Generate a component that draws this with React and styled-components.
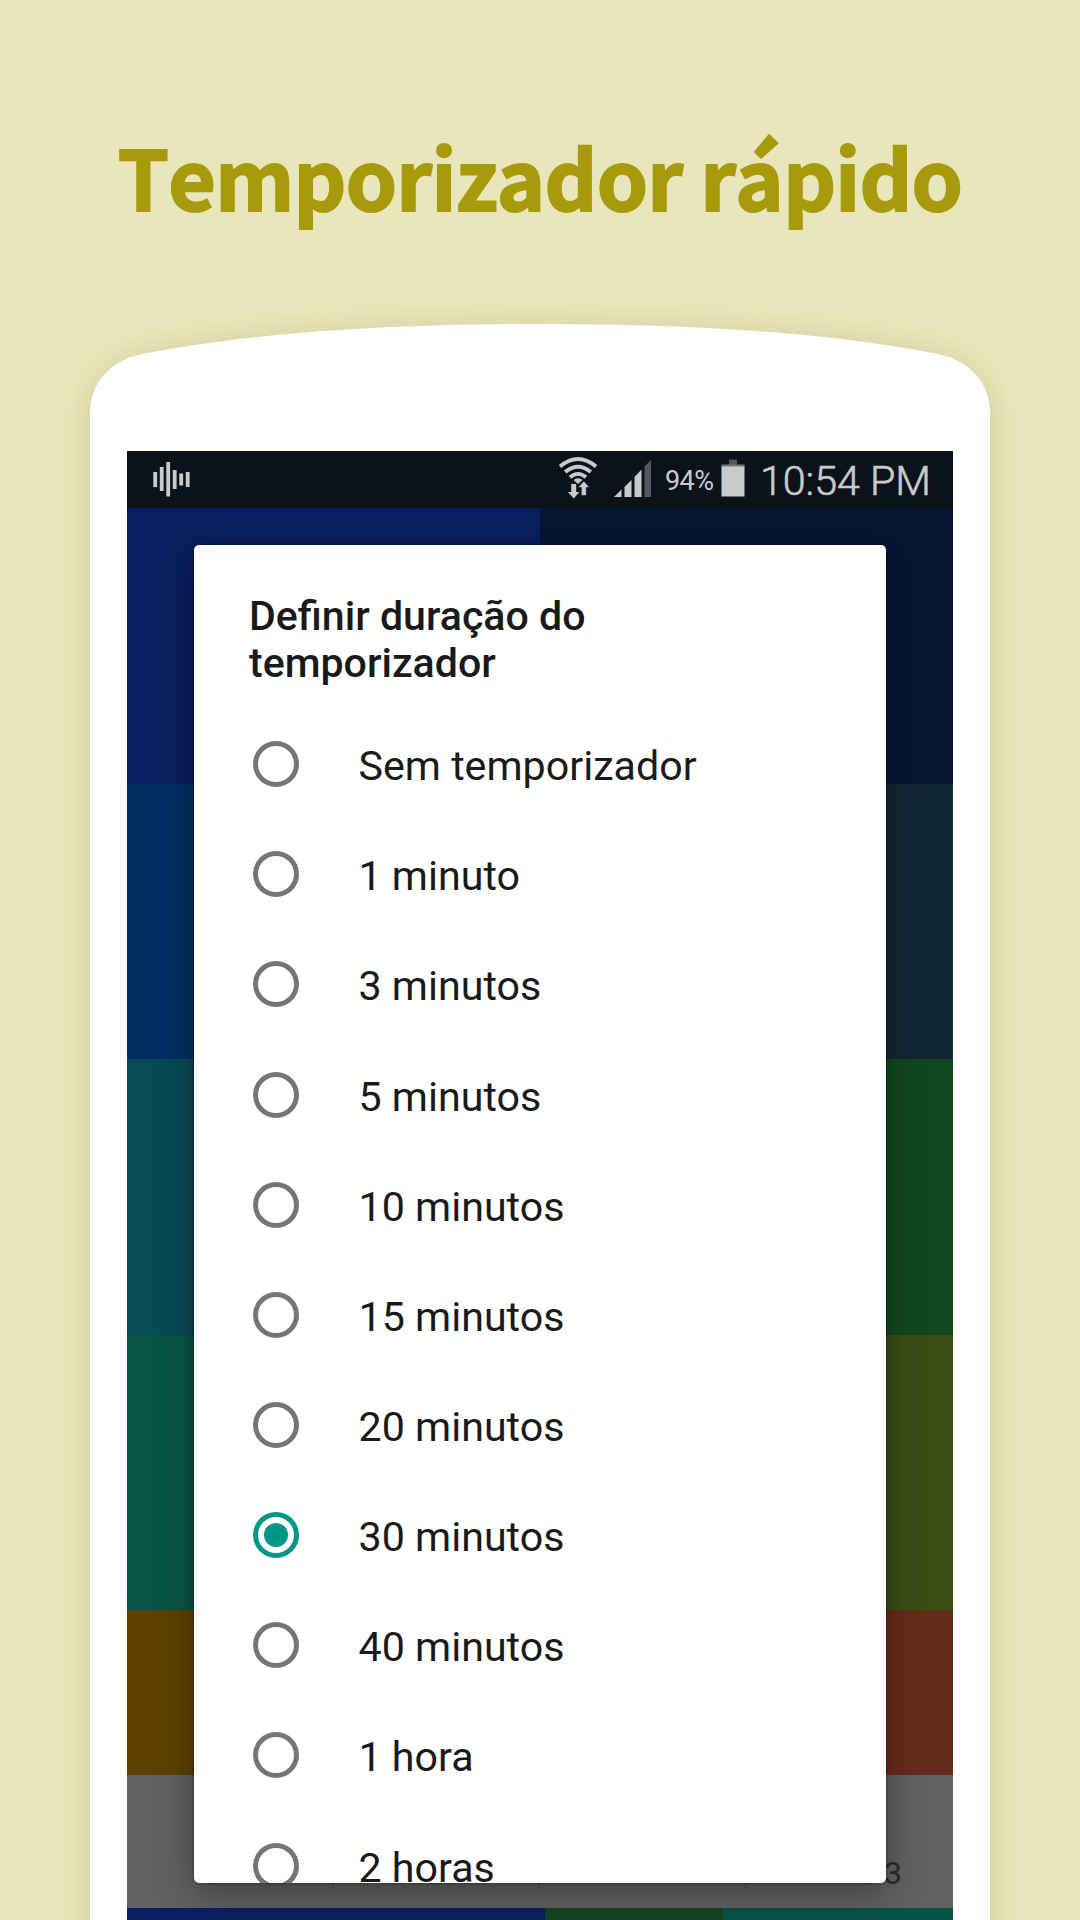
import React from 'react';
import styled, { createGlobalStyle } from 'styled-components';

const GlobalStyle = createGlobalStyle`
  * {
    box-sizing: border-box;
  }
  body {
    margin: 0;
    background: #e9e6bb;
    font-family: Roboto, 'Liberation Sans', sans-serif;
  }
`;

const Page = styled.main`
  display: flex;
  flex-direction: column;
  align-items: center;
  width: 1080px;
  height: 1920px;
  overflow: hidden;
  background: #e9e6bb;
`;

const Heading = styled.h1`
  display: flex;
  align-items: center;
  justify-content: center;
  flex: none;
  width: 100%;
  height: 324px;
  margin: 0;
  padding-top: 27px;
  color: #a89b0b;
  font-family: 'Noto Sans CJK JP', 'Open Sans', sans-serif;
  font-size: 82px;
  font-weight: 700;
  font-kerning: none;
  line-height: 1;
  letter-spacing: -0.7px;
  white-space: nowrap;
  -webkit-text-stroke: 2px #a89b0b;
  stroke-linejoin: round;
`;

const Phone = styled.section`
  position: relative;
  display: flex;
  flex-direction: column;
  flex: none;
  width: 900px;
  height: 1700px;
  padding: 127px 37px 0;
`;

const Shell = styled.div`
  position: absolute;
  inset: 0;
  filter: drop-shadow(0 3px 16px rgba(70, 60, 0, 0.16));
  &::before {
    content: '';
    display: block;
    height: 100%;
    background: #fff;
    clip-path: path('M0 90C0 58 20 37 52 30C165 8 300 0 450 0C600 0 735 8 848 30C880 37 900 58 900 90V1700H0Z');
  }
`;

const Screen = styled.div`
  position: relative;
  display: flex;
  flex-direction: column;
  width: 826px;
  height: 1469px;
  overflow: hidden;
`;

const StatusBar = styled.header`
  display: flex;
  justify-content: space-between;
  flex: none;
  height: 57px;
  padding: 0 22px 0 26px;
  background: #0b1219;
  color: #c9cacb;
`;

const StatusGroup = styled.div`
  display: flex;
  align-items: flex-start;
`;

const StatusIcon = styled.svg`
  display: block;
  flex: none;
  margin-right: ${({ $gap }) => $gap || 0}px;
`;

const Percent = styled.span`
  width: 56px;
  padding-top: 14px;
  font-size: 27px;
  line-height: 32px;
  letter-spacing: -0.5px;
`;

const Clock = styled.span`
  padding-top: 6px;
  font-size: 41.2px;
  font-weight: 300;
  line-height: 48px;
  white-space: nowrap;
  -webkit-text-stroke: 0.6px currentColor;
`;

const Tiles = styled.div`
  display: grid;
  grid-template-columns: 413px 413px;
  grid-template-rows: 276px 275px 276px 275px 165px;
  flex: none;
`;

const Tile = styled.div`
  background: ${({ $color }) => $color};
`;

const Controls = styled.div`
  display: grid;
  grid-template-columns: repeat(4, 1fr);
  flex: none;
  height: 133px;
  padding: 18px 0;
  background: #616161;
`;

const Control = styled.div`
  display: flex;
  align-items: flex-end;
  justify-content: flex-end;
  padding: 0 51px 1px 0;
  border-right: 2px solid #555;
  color: #2a2a2a;
  font-size: 32px;
  line-height: 32px;
  &:last-child {
    border-right: 0;
  }
`;

const Strip = styled.div`
  display: grid;
  grid-template-columns: 418px 177px 1fr;
  flex: 1;
`;

const Dialog = styled.div`
  position: absolute;
  top: 94px;
  left: 67px;
  width: 692px;
  height: 1338px;
  padding: 48px 0 0 55px;
  overflow: hidden;
  border-radius: 5px;
  background: #fff;
  color: #1a1a1a;
  box-shadow: 0 10px 36px rgba(0, 0, 0, 0.36), 0 0 3px rgba(0, 0, 0, 0.5);
`;

const DialogTitle = styled.h2`
  width: 420px;
  height: 116px;
  margin: 0;
  font-size: 41.1px;
  font-weight: 500;
  line-height: 47px;
`;

const Options = styled.ul`
  margin: 0;
  padding: 0;
  list-style: none;
`;

const Option = styled.li`
  display: flex;
  align-items: center;
  height: 110.17px;
  padding-left: 4px;
  font-size: 41.2px;
`;

const Radio = styled.span`
  display: flex;
  align-items: center;
  justify-content: center;
  flex: none;
  width: 46px;
  height: 46px;
  margin-right: 59.5px;
  border: 5px solid ${({ $checked }) => ($checked ? '#009688' : '#757575')};
  border-radius: 50%;
  &::after {
    content: '';
    width: 24px;
    height: 24px;
    border-radius: 50%;
    background: ${({ $checked }) => ($checked ? '#009688' : 'transparent')};
  }
`;

const Label = styled.span`
  padding-top: 4px;
  line-height: 48px;
  white-space: nowrap;
`;

const tileColors = [
  '#091e5e', '#061633',
  '#002f63', '#112633',
  '#074a54', '#11471f',
  '#095445', '#384e15',
  '#5e4100', '#652c1a',
];

const stripColors = ['#091f60', '#11451f', '#085247'];

const durations = [
  'Sem temporizador',
  '1 minuto',
  '3 minutos',
  '5 minutos',
  '10 minutos',
  '15 minutos',
  '20 minutos',
  '30 minutos',
  '40 minutos',
  '1 hora',
  '2 horas',
];

const SoundIcon = () => (
  <StatusIcon width="38" height="57" fill="currentColor">
    <rect x="0.3" y="21" width="3.8" height="15" />
    <rect x="6.8" y="16" width="3.8" height="24" />
    <rect x="13.3" y="11" width="3.8" height="34.5" />
    <rect x="19.8" y="19" width="3.8" height="19" />
    <rect x="26.3" y="22.5" width="3.8" height="12" />
    <rect x="32.8" y="21" width="3.8" height="15" />
  </StatusIcon>
);

const WifiIcon = () => (
  <StatusIcon width="40" height="57" $gap={16} fill="none" stroke="currentColor" strokeWidth="3.8">
    <path d="M2 15.5Q20 .5 38 15.5" />
    <path d="M7.2 21Q20 10.5 32.8 21" />
    <path d="M12 26.2Q20 19.5 28 26.2" />
    <path d="M15.5 29Q20 25.5 24.5 29L20 33Z" fill="currentColor" stroke="none" />
    <path d="M13.2 33h5v8h3.3l-5.8 6.5-5.8-6.5h3.3z" fill="currentColor" stroke="none" />
    <path d="M23.3 44.5V36.5H20l5.8-6.5 5.8 6.5h-3.3v8z" fill="currentColor" stroke="#0b1219" strokeWidth=".6" />
  </StatusIcon>
);

const SignalIcon = () => (
  <StatusIcon width="38" height="57" $gap={13} fill="currentColor">
    <path d="M0 46L7.5 38.5V46Z" />
    <path d="M10.5 36L17.5 29V46H10.5Z" />
    <path d="M20.5 26L27.5 18.5V46H20.5Z" />
    <path d="M30.5 15.5L37 9V46H30.5Z" fill="#54585c" />
  </StatusIcon>
);

const BatteryIcon = () => (
  <StatusIcon width="24" height="57" $gap={15}>
    <rect x="8" y="8.5" width="8" height="6" fill="#54585c" />
    <rect x="0.5" y="13.5" width="23" height="3" fill="#75787b" />
    <rect x="0.5" y="15.5" width="23" height="30" fill="currentColor" />
  </StatusIcon>
);

const DurationDialog = ({ selected }) => (
  <Dialog role="dialog">
    <DialogTitle>Definir duração do temporizador</DialogTitle>
    <Options>
      {durations.map(duration => (
        <Option key={duration}>
          <Radio $checked={duration === selected} />
          <Label>{duration}</Label>
        </Option>
      ))}
    </Options>
  </Dialog>
);

const App = () => {
  return (
    <Page>
      <GlobalStyle />
      <Heading>Temporizador rápido</Heading>
      <Phone>
        <Shell />
        <Screen>
          <StatusBar>
            <SoundIcon />
            <StatusGroup>
              <WifiIcon />
              <SignalIcon />
              <Percent>94%</Percent>
              <BatteryIcon />
              <Clock>10:54 PM</Clock>
            </StatusGroup>
          </StatusBar>

          <Tiles>
            {tileColors.map(color => <Tile key={color} $color={color} />)}
          </Tiles>
          <Controls>
            <Control />
            <Control />
            <Control />
            <Control>3</Control>
          </Controls>
          <Strip>
            {stripColors.map(color => <Tile key={color} $color={color} />)}
          </Strip>

          <DurationDialog selected="30 minutos" />
        </Screen>
      </Phone>
    </Page>
  );
};

export default App;
